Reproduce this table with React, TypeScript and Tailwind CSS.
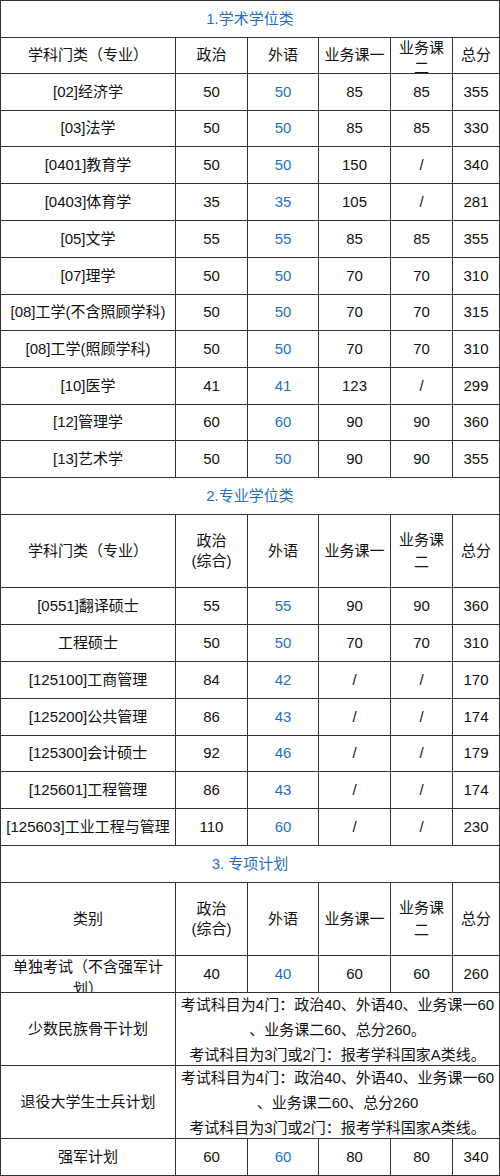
import React from "react";

const FONT = { fontFamily: '"Liberation Sans", "Noto Sans CJK SC", sans-serif' };

type Row = { cells: string[]; h: string };

function Cell({
  children,
  className = "",
  blue = false,
}: {
  children: React.ReactNode;
  className?: string;
  blue?: boolean;
}) {
  return (
    <div
      className={
        "border-r border-b border-[#333333] flex items-center justify-center text-center overflow-hidden " +
        (blue ? "text-[#1f6fc0] " : "text-[#111111] ") +
        className
      }
    >
      {children}
    </div>
  );
}

function DataRow({ r }: { r: Row }) {
  return (
    <div className={"grid grid-cols-[175px_72px_71px_72px_62px_47px] text-[15px] " + r.h}>
      <Cell className="whitespace-nowrap">{r.cells[0]}</Cell>
      <Cell>{r.cells[1]}</Cell>
      <Cell blue>{r.cells[2]}</Cell>
      <Cell>{r.cells[3]}</Cell>
      <Cell>{r.cells[4]}</Cell>
      <Cell>{r.cells[5]}</Cell>
    </div>
  );
}

function Title({ text, h }: { text: string; h: string }) {
  return (
    <div className={"grid grid-cols-[499px] text-[15px] " + h}>
      <Cell blue>{text}</Cell>
    </div>
  );
}

const sec1: Row[] = [
  { cells: ["[02]经济学", "50", "50", "85", "85", "355"], h: "h-[37px]" },
  { cells: ["[03]法学", "50", "50", "85", "85", "330"], h: "h-[36px]" },
  { cells: ["[0401]教育学", "50", "50", "150", "/", "340"], h: "h-[37px]" },
  { cells: ["[0403]体育学", "35", "35", "105", "/", "281"], h: "h-[37px]" },
  { cells: ["[05]文学", "55", "55", "85", "85", "355"], h: "h-[37px]" },
  { cells: ["[07]理学", "50", "50", "70", "70", "310"], h: "h-[37px]" },
  { cells: ["[08]工学(不含照顾学科)", "50", "50", "70", "70", "315"], h: "h-[36px]" },
  { cells: ["[08]工学(照顾学科)", "50", "50", "70", "70", "310"], h: "h-[37px]" },
  { cells: ["[10]医学", "41", "41", "123", "/", "299"], h: "h-[37px]" },
  { cells: ["[12]管理学", "60", "60", "90", "90", "360"], h: "h-[36px]" },
  { cells: ["[13]艺术学", "50", "50", "90", "90", "355"], h: "h-[37px]" },
];

const sec2: Row[] = [
  { cells: ["[0551]翻译硕士", "55", "55", "90", "90", "360"], h: "h-[37px]" },
  { cells: ["工程硕士", "50", "50", "70", "70", "310"], h: "h-[37px]" },
  { cells: ["[125100]工商管理", "84", "42", "/", "/", "170"], h: "h-[37px]" },
  { cells: ["[125200]公共管理", "86", "43", "/", "/", "174"], h: "h-[37px]" },
  { cells: ["[125300]会计硕士", "92", "46", "/", "/", "179"], h: "h-[36px]" },
  { cells: ["[125601]工程管理", "86", "43", "/", "/", "174"], h: "h-[37px]" },
  { cells: ["[125603]工业工程与管理", "110", "60", "/", "/", "230"], h: "h-[37px]" },
];

function TallHeader({ first }: { first: string }) {
  return (
    <div className="grid grid-cols-[175px_72px_71px_72px_62px_47px] h-[73px] text-[15px]">
      <Cell>{first}</Cell>
      <Cell className="leading-[20px]">
        <div>
          政治
          <br />
          (综合)
        </div>
      </Cell>
      <Cell>外语</Cell>
      <Cell className="whitespace-nowrap">业务课一</Cell>
      <Cell className="leading-[22px]">
        <div>
          业务课
          <br />二
        </div>
      </Cell>
      <Cell>总分</Cell>
    </div>
  );
}

function MergedRow({ label, lines }: { label: string; lines: string[] }) {
  return (
    <div className="grid grid-cols-[175px_324px] h-[73px] text-[15px]">
      <Cell>{label}</Cell>
      <Cell className="leading-[25px]">
        <div className="flex flex-col items-center whitespace-nowrap">
          {lines.map((l, i) => (
            <div key={i}>{l}</div>
          ))}
        </div>
      </Cell>
    </div>
  );
}

export default function App() {
  return (
    <div className="w-[500px] h-[1176px] bg-white relative overflow-hidden" style={FONT}>
      <div className="border-t border-l border-[#333333] w-[500px]">
        <Title text="1.学术学位类" h="h-[37px]" />
        <div className="grid grid-cols-[175px_72px_71px_72px_62px_47px] h-[36px] text-[15px]">
          <Cell>学科门类（专业）</Cell>
          <Cell>政治</Cell>
          <Cell>外语</Cell>
          <Cell className="whitespace-nowrap">业务课一</Cell>
          <Cell className="items-start leading-[20px]">
            <div>
              业务课
              <br />二
            </div>
          </Cell>
          <Cell>总分</Cell>
        </div>
        {sec1.map((r, i) => (
          <DataRow key={i} r={r} />
        ))}

        <Title text="2.专业学位类" h="h-[37px]" />
        <TallHeader first="学科门类（专业）" />
        {sec2.map((r, i) => (
          <DataRow key={i} r={r} />
        ))}

        <Title text="3. 专项计划" h="h-[37px]" />
        <TallHeader first="类别" />
        <div className="grid grid-cols-[175px_72px_71px_72px_62px_47px] h-[37px] text-[15px]">
          <Cell className="items-start leading-[22px]">
            <div className="px-[10px]">单独考试（不含强军计划）</div>
          </Cell>
          <Cell>40</Cell>
          <Cell blue>40</Cell>
          <Cell>60</Cell>
          <Cell>60</Cell>
          <Cell>260</Cell>
        </div>
        <MergedRow
          label="少数民族骨干计划"
          lines={[
            "考试科目为4门：政治40、外语40、业务课一60",
            "、业务课二60、总分260。",
            "考试科目为3门或2门：报考学科国家A类线。",
          ]}
        />
        <MergedRow
          label="退役大学生士兵计划"
          lines={[
            "考试科目为4门：政治40、外语40、业务课一60",
            "、业务课二60、总分260",
            "考试科目为3门或2门：报考学科国家A类线。",
          ]}
        />
        <DataRow r={{ cells: ["强军计划", "60", "60", "80", "80", "340"], h: "h-[37px]" }} />
      </div>
    </div>
  );
}
